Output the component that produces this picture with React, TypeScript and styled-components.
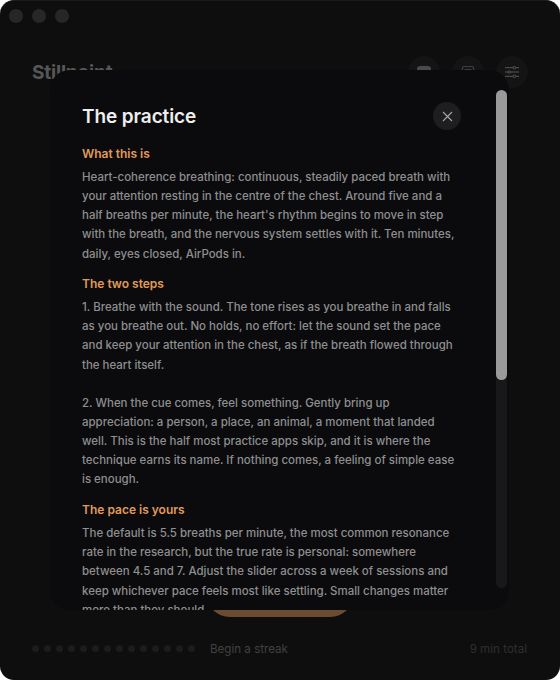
import { createGlobalStyle, styled } from 'styled-components'

const GlobalStyle = createGlobalStyle`
  html, body {
    margin: 0;
    padding: 0;
    background: #ffffff;
  }
  * {
    box-sizing: border-box;
  }
`

const sections = [
  {
    title: 'What this is',
    body: "Heart-coherence breathing: continuous, steadily paced breath with your attention resting in the centre of the chest. Around five and a half breaths per minute, the heart's rhythm begins to move in step with the breath, and the nervous system settles with it. Ten minutes, daily, eyes closed, AirPods in.",
  },
  {
    title: 'The two steps',
    body: '1. Breathe with the sound. The tone rises as you breathe in and falls as you breathe out. No holds, no effort: let the sound set the pace and keep your attention in the chest, as if the breath flowed through the heart itself.\n\n2. When the cue comes, feel something. Gently bring up appreciation: a person, a place, an animal, a moment that landed well. This is the half most practice apps skip, and it is where the technique earns its name. If nothing comes, a feeling of simple ease is enough.',
  },
  {
    title: 'The pace is yours',
    body: 'The default is 5.5 breaths per minute, the most common resonance rate in the research, but the true rate is personal: somewhere between 4.5 and 7. Adjust the slider across a week of sessions and keep whichever pace feels most like settling. Small changes matter more than they should.',
  },
]

function App() {
  return (
    <>
      <GlobalStyle />
      <Window>
        <TitleBar>
          <TrafficLight />
          <TrafficLight />
          <TrafficLight />
        </TitleBar>
        <Header>
          <Brand>Stillpoint</Brand>
          <HeaderActions>
            <IconButton>
              <svg width="16" height="16" viewBox="0 0 16 16" fill="#4a4a4b">
                <rect x="1" y="2" width="14" height="12" rx="3" />
              </svg>
            </IconButton>
            <IconButton>
              <svg width="16" height="16" viewBox="0 0 16 16" fill="none" stroke="#3e3e3f" strokeWidth="1.2">
                <rect x="2.5" y="2.5" width="11" height="11" rx="1.5" />
                <path d="M4.5 5.5h7" />
              </svg>
            </IconButton>
            <IconButton>
              <svg width="14" height="14" viewBox="0 0 14 14" fill="none" stroke="#565657" strokeWidth="1">
                <path d="M0 2.7h14M0 7h14M0 11.3h14" />
                <circle cx="9.3" cy="2.7" r="1.3" fill="#141415" />
                <circle cx="4.3" cy="7" r="1.3" fill="#141415" />
                <circle cx="9.3" cy="11.3" r="1.3" fill="#141415" />
              </svg>
            </IconButton>
          </HeaderActions>
        </Header>
        <Main>
          <BeginButton />
        </Main>
        <Footer>
          <Streak>
            {Array.from({ length: 14 }, (_, i) => (
              <StreakDot key={i} />
            ))}
          </Streak>
          <StreakLabel>Begin a streak</StreakLabel>
          <Total>9 min total</Total>
        </Footer>
        <Modal>
          <ModalHeader>
            <ModalTitle>The practice</ModalTitle>
            <CloseButton>
              <svg width="11" height="11" viewBox="0 0 11 11" fill="none" stroke="#a6a6a7" strokeWidth="1.1">
                <path d="M1 1l9 9M10 1l-9 9" />
              </svg>
            </CloseButton>
          </ModalHeader>
          {sections.map((section) => (
            <Section key={section.title}>
              <SectionTitle>{section.title}</SectionTitle>
              <SectionBody>{section.body}</SectionBody>
            </Section>
          ))}
          <ScrollTrack>
            <ScrollThumb />
          </ScrollTrack>
        </Modal>
      </Window>
    </>
  )
}

export default App

// #region styles

const Window = styled.div`
  position: relative;
  width: 560px;
  height: 680px;
  display: flex;
  flex-direction: column;
  overflow: hidden;
  border-radius: 14px;
  background: #0e0e0f;
  border-top: 1px solid #1a1a1b;
  font-family: Inter, 'Liberation Sans', sans-serif;
`

const TitleBar = styled.div`
  display: flex;
  gap: 9px;
  padding: 8px 0 0 9px;
`

const TrafficLight = styled.span`
  width: 14px;
  height: 14px;
  border-radius: 50%;
  background: #272728;
`

const Header = styled.div`
  display: flex;
  align-items: center;
  justify-content: space-between;
  padding: 33px 32px 0;
`

const Brand = styled.div`
  font-size: 19px;
  font-weight: 700;
  letter-spacing: -0.2px;
  color: #565657;
`

const HeaderActions = styled.div`
  display: flex;
  gap: 12px;
`

const IconButton = styled.div`
  width: 32px;
  height: 32px;
  border-radius: 50%;
  display: flex;
  align-items: center;
  justify-content: center;
  background: #141415;
`

const Main = styled.div`
  flex: 1;
  display: flex;
  align-items: flex-end;
  justify-content: center;
`

const BeginButton = styled.div`
  width: 148px;
  height: 48px;
  border-radius: 24px;
  background: #6b4b31;
`

const Footer = styled.div`
  display: flex;
  align-items: center;
  height: 63px;
  padding: 0 33px 0 32px;
`

const Streak = styled.div`
  display: flex;
  gap: 5px;
`

const StreakDot = styled.span`
  width: 7px;
  height: 7px;
  border-radius: 50%;
  background: #1c1c1d;
`

const StreakLabel = styled.div`
  margin-left: 15px;
  font-size: 11.6px;
  color: #414142;
`

const Total = styled.div`
  margin-left: auto;
  font-size: 11.6px;
  color: #2f2f30;
`

const Modal = styled.div`
  position: absolute;
  left: 50px;
  top: 69px;
  width: 459px;
  height: 540px;
  overflow: hidden;
  padding: 32px 52px 0 32px;
  border-radius: 20px;
  background: #0b0b0d;
`

const ModalHeader = styled.div`
  display: flex;
  align-items: center;
  justify-content: space-between;
  margin-right: -4px;
  margin-bottom: 16px;
`

const ModalTitle = styled.h2`
  margin: 0;
  font-size: 19px;
  font-weight: 600;
  letter-spacing: -0.1px;
  color: #eeeeee;
`

const CloseButton = styled.div`
  width: 28px;
  height: 28px;
  border-radius: 50%;
  display: flex;
  align-items: center;
  justify-content: center;
  background: #1e1e20;
`

const Section = styled.section`
  margin-bottom: 12.5px;
`

const SectionTitle = styled.h3`
  margin: 0 0 6px;
  font-size: 12px;
  line-height: 16px;
  font-weight: 600;
  color: #e09a5c;
`

const SectionBody = styled.p`
  margin: 0;
  font-size: 11.48px;
  font-weight: 450;
  line-height: 19.14px;
  white-space: pre-line;
  color: #8f8f90;
`

const ScrollTrack = styled.div`
  position: absolute;
  top: 20px;
  right: 2px;
  width: 11px;
  height: 498px;
  border-radius: 6px;
  background: #18181a;
`

const ScrollThumb = styled.div`
  height: 290px;
  border-radius: 6px;
  background: #9a9a9a;
`

// #endregion styles
